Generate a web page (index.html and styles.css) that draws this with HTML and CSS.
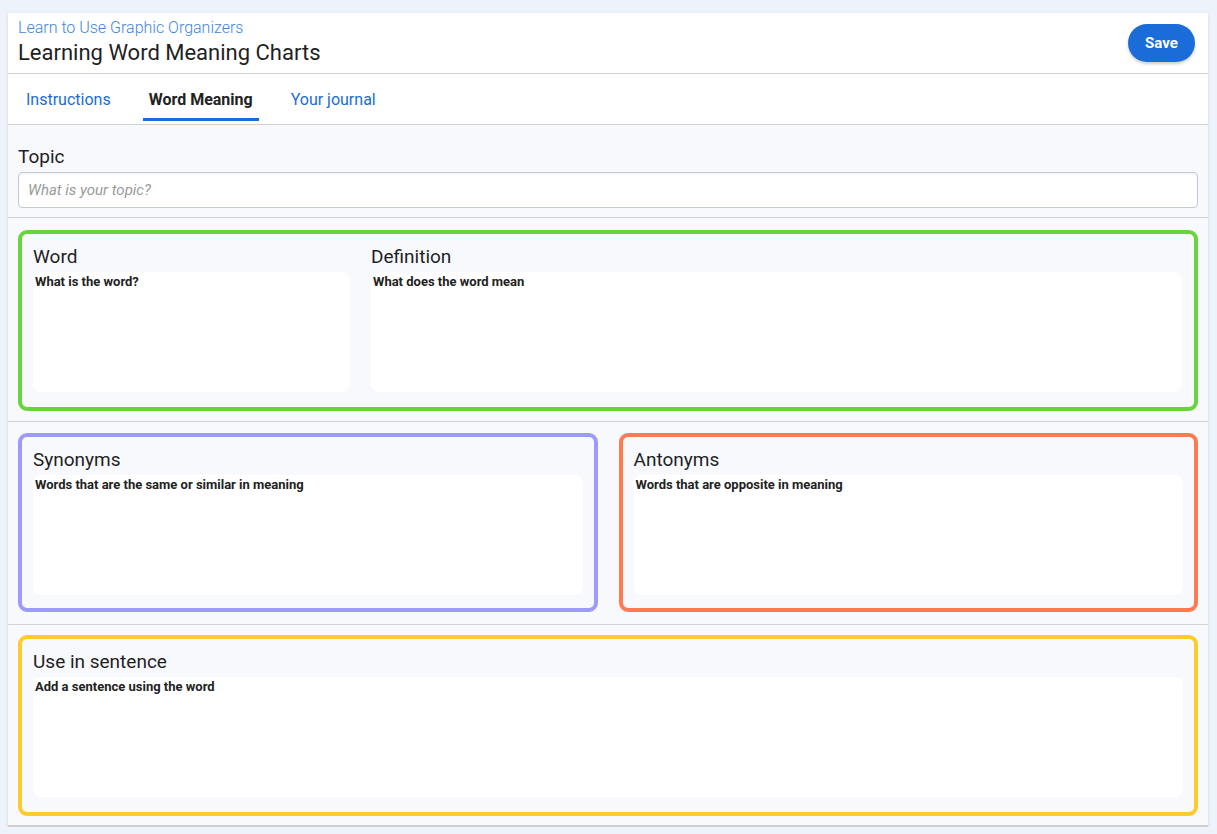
FILE: index.html
```html
<!DOCTYPE html>
<html lang="en">
<head>
<meta charset="utf-8">
<title>Learning Word Meaning Charts</title>
<link rel="stylesheet" href="styles.css">
</head>
<body>
<div class="card">
  <header class="header">
    <div class="titles">
      <a class="crumb" href="#">Learn to Use Graphic Organizers</a>
      <h1 class="title">Learning Word Meaning Charts</h1>
    </div>
    <button class="save">Save</button>
  </header>
  <nav class="tabs">
    <a class="tab" href="#">Instructions</a>
    <a class="tab active" href="#">Word Meaning</a>
    <a class="tab" href="#">Your journal</a>
  </nav>
  <section class="section topic">
    <label class="topic-label">Topic</label>
    <input class="topic-input" type="text" placeholder="What is your topic?">
  </section>
  <section class="section sec-word">
    <div class="box green word-grid">
      <div class="field">
        <div class="label">Word</div>
        <textarea class="area" placeholder="What is the word?"></textarea>
      </div>
      <div class="field">
        <div class="label">Definition</div>
        <textarea class="area" placeholder="What does the word mean"></textarea>
      </div>
    </div>
  </section>
  <section class="section pair">
    <div class="box purple">
      <div class="label">Synonyms</div>
      <textarea class="area" placeholder="Words that are the same or similar in meaning"></textarea>
    </div>
    <div class="box orange">
      <div class="label">Antonyms</div>
      <textarea class="area" placeholder="Words that are opposite in meaning"></textarea>
    </div>
  </section>
  <section class="section sec-sentence">
    <div class="box yellow tall">
      <div class="label">Use in sentence</div>
      <textarea class="area" placeholder="Add a sentence using the word"></textarea>
    </div>
  </section>
</div>
</body>
</html>
```
FILE: styles.css
```css
* { box-sizing: border-box; }
html, body { margin: 0; }
body {
  background: #eef2fa;
  padding: 13px 9px 0 8px;
  font-family: Roboto, "Liberation Sans", Arial, sans-serif;
  color: #202124;
}
.card {
  width: 1200px;
  background: #f8f9fd;
  box-shadow: 0 1px 3px rgba(60, 70, 100, 0.18);
}
.header {
  background: #fff;
  display: flex;
  align-items: center;
  justify-content: space-between;
  padding: 6px 13px 6px 10px;
  border-bottom: 1px solid #d2d2d2;
  height: 61px;
}
.titles { display: flex; flex-direction: column; gap: 2px; }
.crumb {
  color: #3d85e0;
  text-decoration: none;
  font-size: 16px;
  line-height: 18px;
  font-weight: 300;
}
.title {
  margin: 0;
  font-size: 22px;
  line-height: 28px;
  font-weight: 400;
  color: #1f1f1f;
}
.save {
  width: 67px;
  height: 38px;
  border: none;
  border-radius: 19px;
  background: #1a6dd8;
  color: #fff;
  font-family: inherit;
  font-size: 15px;
  font-weight: 700;
  box-shadow: 0 2px 3px rgba(0, 0, 0, 0.2);
}
.tabs {
  background: #fff;
  height: 51px;
  display: flex;
  gap: 26px;
  padding-left: 12px;
  border-bottom: 1px solid #d2d2d2;
}
.tab {
  padding: 6px 6px 0;
  display: flex;
  align-items: center;
  font-size: 16px;
  color: #1a6dd8;
  text-decoration: none;
  border-bottom: 3px solid transparent;
  margin-bottom: 3px;
}
.tab.active {
  color: #222;
  font-weight: 700;
  border-bottom-color: #1a6dd8;
}
.section {
  padding: 11px 10px 12px;
  border-bottom: 1px solid #d2d2d2;
}
.topic {
  padding: 20px 10px 9px;
  display: flex;
  flex-direction: column;
  gap: 3px;
}
.topic-label {
  font-size: 19px;
  line-height: 24px;
  color: #1f1f1f;
}
.topic-input {
  height: 36px;
  border: 1px solid #c3c9d6;
  border-radius: 4px;
  background: #fff;
  padding: 0 9px;
  font-family: inherit;
  font-size: 15px;
  box-shadow: inset 0 1px 2px rgba(0,0,0,0.06);
}
.topic-input::placeholder { color: #9a9a9a; font-style: italic; }
.sec-word { padding: 12px 10px 10px; }
.sec-sentence { padding: 10px 10px 9px; border-bottom: 2px solid #cfcfcf; }
.box {
  border: 4px solid;
  border-radius: 9px;
  padding: 11px 11px 0;
  background: #f8f9fd;
  height: 179px;
}
.box.tall { height: 181px; }
.green { border-color: #66d43d; }
.purple { border-color: #9c9bf9; }
.orange { border-color: #ff7a4f; }
.yellow { border-color: #ffca2c; }
.word-grid {
  display: grid;
  grid-template-columns: 317px 1fr;
  column-gap: 21px;
  padding: 11px 12px 0 11px;
  height: 181px;
}
.pair {
  display: grid;
  grid-template-columns: 1fr 1fr;
  column-gap: 21px;
}
.field { display: flex; flex-direction: column; }
.label {
  font-size: 19px;
  line-height: 24px;
  color: #1f1f1f;
  margin-bottom: 3px;
}
.area {
  display: block;
  width: 100%;
  height: 120px;
  border: none;
  border-radius: 8px;
  background: #fff;
  resize: none;
  padding: 2px 2px;
  font-family: inherit;
  font-size: 13px;
  font-weight: 700;
}
.area::placeholder { color: #222; opacity: 1; }
```
